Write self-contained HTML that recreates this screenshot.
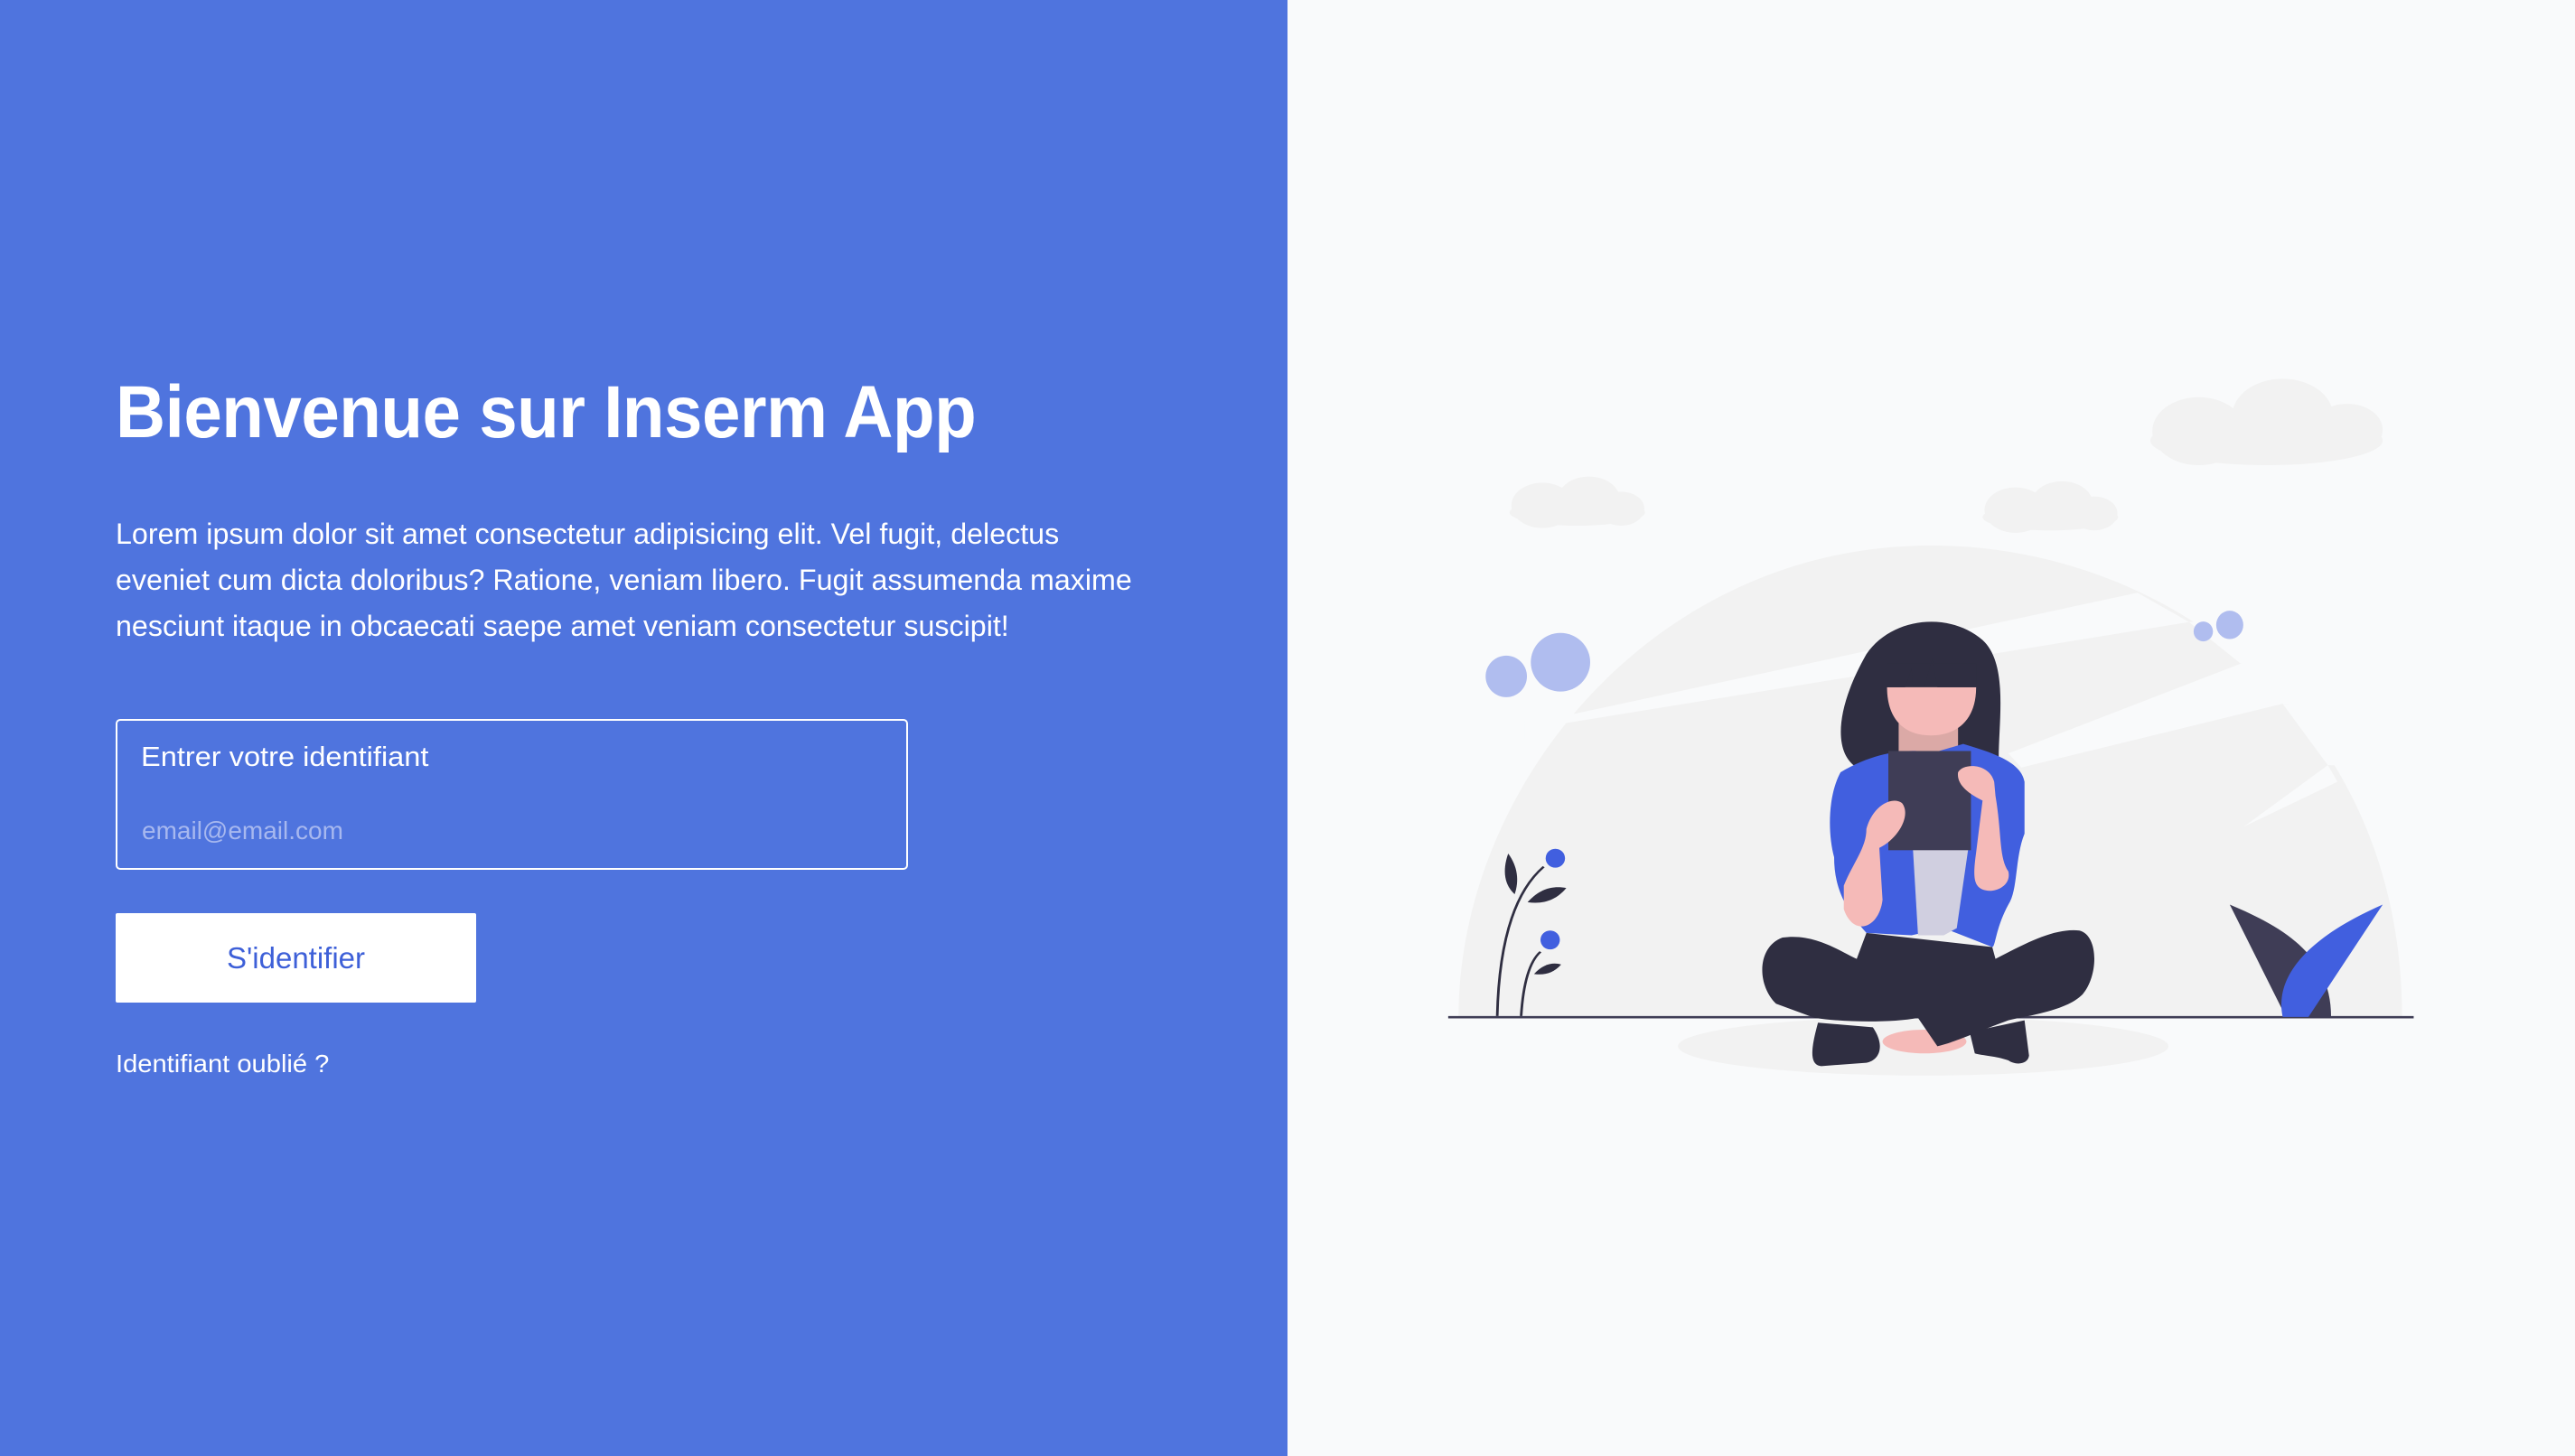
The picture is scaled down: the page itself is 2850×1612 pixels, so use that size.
<!DOCTYPE html>
<html><head><meta charset="utf-8"><style>
*{margin:0;padding:0;box-sizing:border-box}
body{width:2850px;height:1612px;overflow:hidden;background:#f9fafb;font-family:"Liberation Sans",sans-serif;position:relative}
.left{position:absolute;left:0;top:0;width:1425px;height:1612px;background:#4f74de;color:#fff}
.t{position:absolute;left:128px;top:410px;font-size:82px;font-weight:bold;white-space:nowrap;transform:scaleX(0.93);transform-origin:left top;letter-spacing:-0.5px}
.p{position:absolute;left:128px;top:566px;font-size:32px;line-height:51px;white-space:nowrap;transform:scaleX(1.007);transform-origin:left top}
.box{position:absolute;left:128px;top:796px;width:877px;height:167px;border:2px solid #fff;border-radius:5px}
.lab{position:absolute;left:156px;top:820px;font-size:31px;white-space:nowrap;transform:scaleX(1.05);transform-origin:left top}
.ph{position:absolute;left:157px;top:904px;font-size:28px;color:#a7b8ef;white-space:nowrap}
.btn{position:absolute;left:128px;top:1011px;width:399px;height:99px;background:#fff;border-radius:2px;color:#3e60d8;font-size:33px;display:flex;align-items:center;justify-content:center}
.lk{position:absolute;left:128px;top:1162px;font-size:28px;white-space:nowrap;transform:scaleX(1.04);transform-origin:left top}
svg{position:absolute;left:0;top:0}
</style></head><body>
<div class="left">
<div class="t">Bienvenue sur Inserm App</div>
<div class="p">Lorem ipsum dolor sit amet consectetur adipisicing elit. Vel fugit, delectus<br>eveniet cum dicta doloribus? Ratione, veniam libero. Fugit assumenda maxime<br>nesciunt itaque in obcaecati saepe amet veniam consectetur suscipit!</div>
<div class="box"></div>
<div class="lab">Entrer votre identifiant</div>
<div class="ph">email@email.com</div>
<div class="btn">S'identifier</div>
<div class="lk">Identifiant oublié ?</div>
</div>
<svg width="2850" height="1612" viewBox="0 0 2850 1612">
<g transform="translate(1580,400) scale(0.7143,0.523)">
<g fill="#f2f2f2">
<circle cx="1325" cy="115" r="78"/><circle cx="1195" cy="148" r="72"/><ellipse cx="1300" cy="168" rx="180" ry="52"/><circle cx="1425" cy="145" r="55"/>
<circle cx="250" cy="292" r="48"/><circle cx="178" cy="305" r="48"/><ellipse cx="232" cy="320" rx="105" ry="28"/><circle cx="300" cy="312" r="36"/>
<circle cx="983" cy="302" r="48"/><circle cx="911" cy="315" r="48"/><ellipse cx="965" cy="330" rx="105" ry="28"/><circle cx="1033" cy="322" r="36"/>
</g>
<path d="M48,1388 C48,900 350,390 780,390 C1150,390 1510,760 1510,1388 Z" fill="#f2f2f2"/>
<g fill="#f9fafb">
<polygon points="150,760 215,750 1100,490 1180,552 205,768 150,800"/>
<polygon points="900,830 1260,640 1600,600 1600,725 1325,725 920,860"/>
<polygon points="1265,985 1395,855 1410,890"/>
<polygon points="1260,640 1180,552 1600,500 1600,640"/>
<polygon points="1395,855 1325,725 1600,725 1600,860"/>
</g>
<g fill="#b0bdef">
<ellipse cx="122" cy="667" rx="32" ry="44"/><ellipse cx="206" cy="637" rx="46" ry="62"/>
<ellipse cx="1202" cy="572" rx="15" ry="21"/><ellipse cx="1243" cy="558" rx="21" ry="30"/>
</g>
<ellipse cx="768" cy="1450" rx="380" ry="62" fill="#f2f2f2"/>
<rect x="32" y="1386" width="1496" height="5" fill="#3f3d56"/>
<path d="M108,1386 Q112,1150 180,1070" stroke="#2f2e41" stroke-width="4" fill="none"/>
<path d="M145,1386 Q150,1280 175,1250" stroke="#2f2e41" stroke-width="4" fill="none"/>
<path d="M125,1042 C115,1080 120,1110 135,1128 C142,1100 140,1070 125,1042 Z" fill="#2f2e41"/>
<path d="M155,1145 C175,1115 195,1110 215,1115 C200,1140 180,1150 155,1145 Z" fill="#2f2e41"/>
<path d="M165,1297 C180,1275 195,1272 207,1277 C195,1295 182,1300 165,1297 Z" fill="#2f2e41"/>
<ellipse cx="198" cy="1052" rx="15" ry="20" fill="#415fdf"/>
<ellipse cx="190" cy="1225" rx="15" ry="20" fill="#415fdf"/>
<path d="M1243,1150 C1330,1200 1400,1260 1400,1388 L1330,1388 Z" fill="#3f3d56"/>
<path d="M1480,1150 C1380,1210 1310,1290 1325,1388 L1365,1388 Z" fill="#415fdf"/>
<path d="M665,860 C630,830 630,740 680,620 C720,540 810,530 860,590 C900,640 885,760 885,840 L700,870 Z" fill="#2f2e41"/>
<rect x="730" y="760" width="92" height="70" fill="#dba9a6"/>
<path d="M712,690 L850,690 C850,760 820,792 780,792 C740,792 712,760 712,690 Z" fill="#f5bab8"/>
<path d="M712,690 L740,690 L750,650 L752,688 L770,688 L782,630 L790,690 L850,690 L850,640 L712,640 Z" fill="#2f2e41"/>
<ellipse cx="770" cy="1440" rx="65" ry="25" fill="#f5bab8"/>
<path d="M540,1360 C510,1320 510,1240 550,1220 C600,1210 640,1250 665,1265 L680,1210 L875,1240 L880,1265 C930,1230 970,1200 1010,1205 C1040,1215 1040,1300 1015,1340 C990,1375 930,1385 900,1395 C850,1420 820,1440 790,1450 L760,1390 C720,1400 650,1400 600,1390 Z" fill="#2f2e41"/>
<path d="M605,1400 L690,1410 C710,1450 700,1480 680,1485 L610,1492 C590,1490 595,1450 605,1400 Z" fill="#2f2e41"/>
<path d="M840,1420 L925,1395 L932,1470 C930,1490 910,1490 900,1480 C880,1470 860,1470 848,1465 Z" fill="#2f2e41"/>
<path d="M640,870 C700,820 760,820 780,830 L830,810 C880,830 920,850 925,890 L925,1000 C910,1050 915,1120 900,1150 C880,1200 880,1240 875,1240 L800,1200 L750,1215 L680,1210 C640,1150 630,1100 630,1050 C620,1000 620,920 640,870 Z" fill="#415fdf"/>
<polygon points="752,1030 838,1030 820,1200 800,1215 760,1215" fill="#d0cfe0"/>
<rect x="714" y="825" width="128" height="210" fill="#3f3d56"/>
<path d="M645,1110 C660,1060 680,1030 680,990 C690,940 720,920 735,935 C750,960 730,1010 700,1030 L705,1140 C700,1200 660,1220 645,1160 Z" fill="#f5bab8"/>
<path d="M822,870 C830,850 870,850 878,890 L880,920 C890,1000 885,1050 900,1080 C905,1110 880,1125 865,1120 C845,1115 845,1090 850,1040 L860,930 C830,910 820,890 822,870 Z" fill="#f5bab8"/>
</g>
</svg>
</body></html>
